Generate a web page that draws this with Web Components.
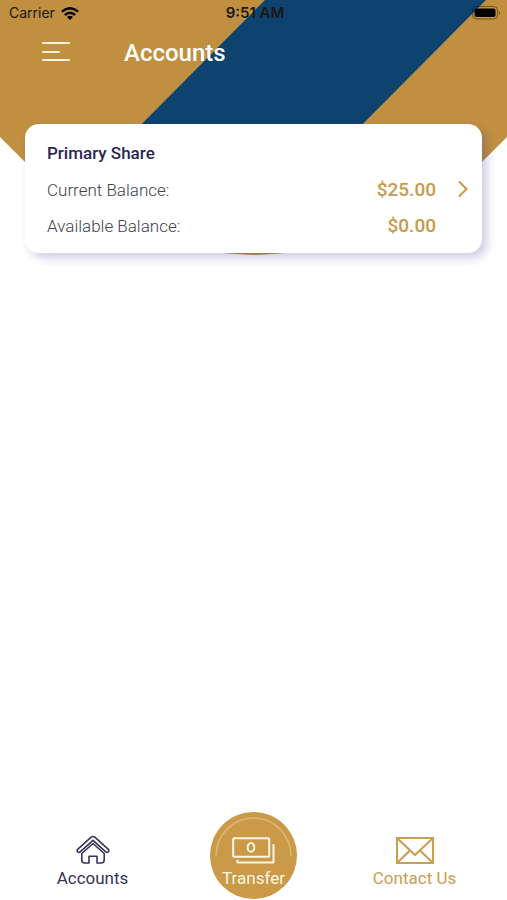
<!DOCTYPE html>
<html lang="en">
<head>
<meta charset="utf-8">
<meta name="viewport" content="width=device-width, initial-scale=1">
<title>Accounts</title>
<style>
  body { margin: 0; background: #fff; font-family: Roboto, "Liberation Sans", sans-serif; }
</style>
</head>
<body>
<bank-app>
  <status-bar slot="top" carrier="Carrier" time="9:51 AM"></status-bar>
  <app-header slot="top">Accounts</app-header>
  <account-card>
    <span slot="name">Primary Share</span>
    <balance-row label="Current Balance:" amount="$25.00"></balance-row>
    <balance-row label="Available Balance:" amount="$0.00"></balance-row>
  </account-card>
  <tab-bar slot="bottom">
    <tab-item href="#accounts" current>
      <svg slot="icon" width="34" height="30" viewBox="0 0 34 30" fill="none" stroke="currentColor" stroke-width="1.6" stroke-linejoin="round" stroke-linecap="round" aria-hidden="true">
        <path d="M15.2 2.2 1.6 14.4Q.6 15.6 1.7 16.8 2.9 17.9 4.2 16.8L17 5.4 29.8 16.8Q31.1 17.9 32.3 16.8 33.4 15.6 32.4 14.4L18.8 2.2Q17 .8 15.2 2.2Z"/>
        <path d="M5.8 18.5V25Q5.8 28 8.8 28H13V21.3H21V28H25.2Q28.2 28 28.2 25V18.5L17 8.5Z"/>
      </svg>Accounts</tab-item>
    <tab-item href="#transfer" round>
      <svg slot="icon" width="43" height="28" viewBox="0 0 43 28" fill="none" stroke="currentColor" stroke-width="2" stroke-linejoin="round" stroke-linecap="round" aria-hidden="true">
        <rect x="1.2" y="1.2" width="36" height="18.5" rx="1"/>
        <ellipse cx="19" cy="10.4" rx="3.3" ry="4.4"/>
        <path d="M41.5 8V25.5H5.5V23.5"/>
      </svg>Transfer</tab-item>
    <tab-item href="#contact">
      <svg slot="icon" width="38" height="28" viewBox="0 0 38 28" fill="none" stroke="currentColor" stroke-width="2" aria-hidden="true">
        <path d="M1 1H37V26H1ZM1 1 19 18 37 1M1 26 14 13.500M37 26 24 13.5"/>
      </svg>Contact Us</tab-item>
  </tab-bar>
</bank-app>
<script>
class ShadowElement extends HTMLElement {
  constructor() {
    super();
    this.attachShadow({ mode: "open" });
  }
  connectedCallback() {
    this.shadowRoot.innerHTML = this.render();
  }
}

customElements.define("bank-app", class extends ShadowElement {
  render() {
    return `<style>
      :host { display: flex; flex-direction: column; min-height: 100vh; position: relative; isolation: isolate; overflow: hidden; }
      .art { position: absolute; top: 0; left: 0; width: 100%; height: 256px; z-index: -1; }
      main { flex: 1; padding: 0 25px; }
    </style>
    <svg class="art" viewBox="0 0 507 256" preserveAspectRatio="none" aria-hidden="true">
      <defs><clipPath id="edge"><path d="M0 0H507V137L417 227Q308 254 254 255 200 254 90 227L0 137Z"/></clipPath></defs>
      <g clip-path="url(#edge)">
        <path fill="#c08f40" d="M0 0H507V256H0Z"/>
        <path fill="#0e426f" d="M265 0H486L322 165H101Z"/>
      </g>
    </svg>
    <slot name="top"></slot>
    <main><slot></slot></main>
    <slot name="bottom"></slot>`;
  }
});

customElements.define("status-bar", class extends ShadowElement {
  render() {
    return `<style>
      :host { display: grid; grid-template-columns: 1fr auto 1fr; align-items: center; height: 26px; padding: 0 6px 0 9px; font: 14px/26px Inter, "Liberation Sans", sans-serif; color: #1a1713; }
      .left { display: flex; align-items: center; gap: 6px; }
      .time { font-size: 15px; font-weight: 600; }
      .battery { justify-self: end; }
    </style>
    <span class="left"><span>${this.getAttribute("carrier")}</span>
      <svg width="18" height="13" viewBox="0 0 18 13" fill="none" stroke="#000" stroke-width="2.4" role="img" aria-label="Wi-Fi">
        <path d="M.9 4.7Q9-2.3 17.1 4.7M3.9 8Q9 3.6 14.1 8"/><path fill="#000" stroke="none" d="M6 10Q9 7.6 12 10L9 13Z"/>
      </svg></span>
    <span class="time">${this.getAttribute("time")}</span>
    <svg class="battery" width="30" height="14" viewBox="0 0 30 14" role="img" aria-label="Battery full">
      <rect x="1.5" y=".5" width="25" height="12.5" rx="4" fill="none" stroke="#000" stroke-opacity=".4"/>
      <rect x="3.5" y="2.5" width="21" height="8.5" rx="2" fill="#000"/>
      <path d="M28 5Q30 6.8 28 8.8Z" fill="#000" fill-opacity=".5"/>
    </svg>`;
  }
});

customElements.define("app-header", class extends ShadowElement {
  render() {
    return `<style>
      :host { display: flex; align-items: center; gap: 54px; height: 54px; padding: 0 42px; margin-bottom: 44px; color: #fff; }
      button { display: flex; padding: 0; border: 0; background: none; color: inherit; cursor: pointer; }
      h1 { margin: 0; font-size: 24px; line-height: 32px; font-weight: 500; }
    </style>
    <button type="button" aria-label="Menu">
      <svg width="28" height="24" viewBox="0 0 28 24" fill="none" stroke="#fdf3df" stroke-width="2" stroke-linecap="round"><path d="M1 2H27M1 11H17M1 19H27"/></svg>
    </button>
    <h1><slot></slot></h1>`;
  }
});

customElements.define("account-card", class extends ShadowElement {
  render() {
    return `<style>
      :host { display: block; background: #fff; border-radius: 14px; box-shadow: 5px 5px 10px rgba(50, 45, 150, .24); }
      a { display: grid; grid-template-columns: 1fr 12px; column-gap: 21px; padding: 17px 13px 9px 22px; color: inherit; text-decoration: none; }
      h2 { grid-column: 1 / -1; margin: 0 0 7px; font-size: 17px; line-height: 24px; font-weight: 500; color: #2a2653; }
      svg { margin-top: 8px; }
    </style>
    <a href="#primary-share">
      <h2><slot name="name"></slot></h2>
      <div><slot></slot></div>
      <svg width="12" height="18" viewBox="0 0 12 18" fill="none" stroke="#c59746" stroke-width="2" aria-hidden="true"><path d="M2 1.5 9.5 9 2 16.5"/></svg>
    </a>`;
  }
});

customElements.define("balance-row", class extends ShadowElement {
  render() {
    return `<style>
      :host { display: flex; justify-content: space-between; height: 36px; line-height: 36px; }
      .label { font-size: 17px; font-weight: 300; color: #42414f; }
      .amount { font-size: 19px; font-weight: 500; color: #c79a4b; }
    </style>
    <span class="label">${this.getAttribute("label")}</span><span class="amount">${this.getAttribute("amount")}</span>`;
  }
});

customElements.define("tab-bar", class extends ShadowElement {
  render() {
    return `<style>
      :host { display: block; padding: 0 12px 1px; }
      nav { display: grid; grid-template-columns: repeat(3, 1fr); align-items: end; justify-items: center; }
    </style>
    <nav aria-label="Main"><slot></slot></nav>`;
  }
});

customElements.define("tab-item", class extends ShadowElement {
  render() {
    const current = this.hasAttribute("current") ? ' aria-current="page"' : "";
    return `<style>
      :host { display: block; color: #cb9d50; font-size: 17px; line-height: 24px; }
      :host([current]) { color: #373359; }
      :host([round]) { color: #fff6e4; }
      a { display: flex; flex-direction: column; align-items: center; justify-content: flex-end; gap: 1px; box-sizing: border-box; height: 87px; padding-bottom: 9px; color: inherit; text-decoration: none; position: relative; }
      :host([round]) a { width: 87px; border-radius: 50%; background: #cb9a49; }
      .ring { display: none; position: absolute; top: 5px; left: 5px; }
      :host([round]) .ring { display: block; }
    </style>
    <a href="${this.getAttribute("href")}"${current}>
      <svg class="ring" width="77" height="40" viewBox="0 0 77 40" fill="none" stroke="#deb778" stroke-width="1.5" aria-hidden="true"><path d="M1 39A37.5 38 0 0 1 76 39"/></svg>
      <slot name="icon"></slot><span><slot></slot></span>
    </a>`;
  }
});
</script>
</body>
</html>
